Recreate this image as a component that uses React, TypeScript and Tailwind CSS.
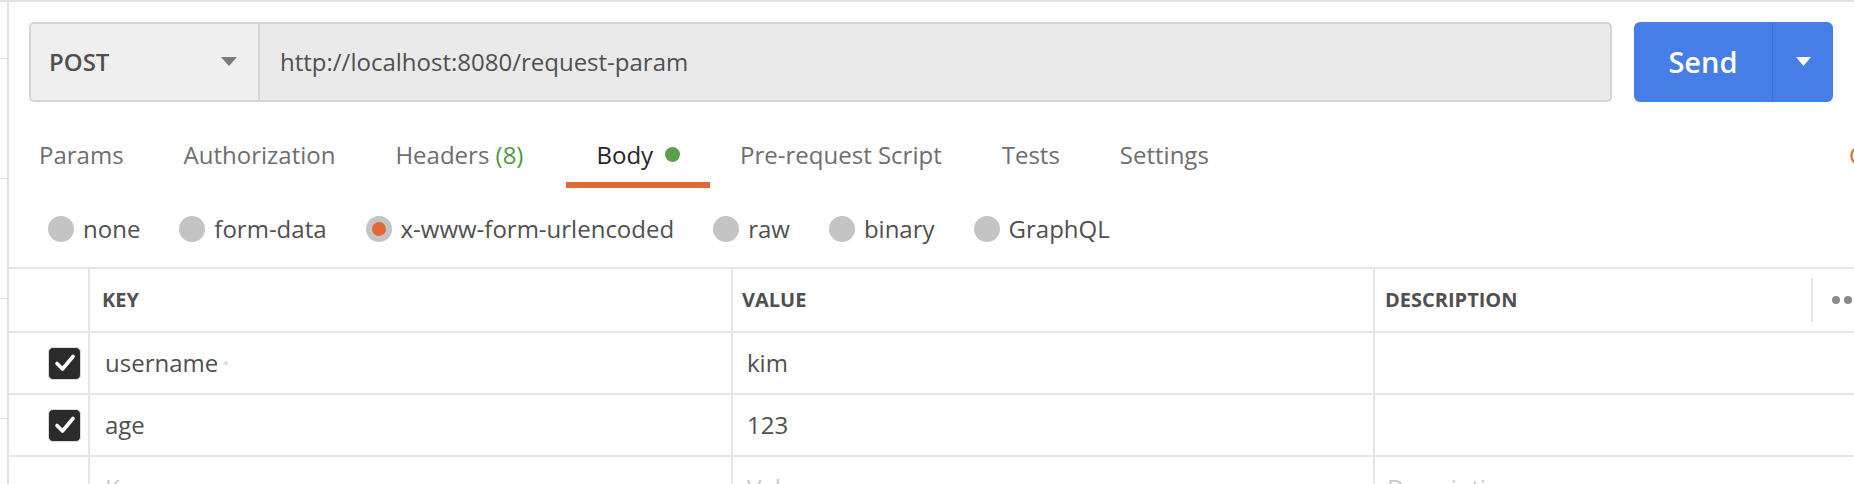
import React from "react";

const tabs = [
  { label: "Params" },
  { label: "Authorization" },
  { label: "Headers", count: "(8)" },
  { label: "Body", active: true, dot: true },
  { label: "Pre-request Script" },
  { label: "Tests" },
  { label: "Settings" },
];

const bodyTypes = [
  { label: "none" },
  { label: "form-data" },
  { label: "x-www-form-urlencoded", selected: true },
  { label: "raw" },
  { label: "binary" },
  { label: "GraphQL" },
];

const rows = [
  { key: "username", value: "kim", marker: true },
  { key: "age", value: "123" },
];

function Checkbox() {
  return (
    <div className="w-[33px] h-[33px] rounded-[5px] bg-[#2b2b2b] border border-[#d9d9d9] flex items-center justify-center">
      <svg width="24" height="24" viewBox="0 0 24 24" fill="none">
        <path d="M4 12.5 L9.5 18 L20 5.5" stroke="white" strokeWidth="3.6" strokeLinecap="round" strokeLinejoin="round" />
      </svg>
    </div>
  );
}

export default function App() {
  return (
    <div className="w-[1854px] h-[484px] overflow-hidden bg-white flex font-['Open_Sans',sans-serif] border-t-2 border-[#e2e2e2]">
      {/* sliver of the sidebar list behind the panel */}
      <div className="w-[7px] shrink-0 pt-[56px]">
        <div className="h-[120px] border-t border-[#e4e4e4]" />
        <div className="h-[120px] border-t border-[#e4e4e4]" />
        <div className="h-[120px] border-t border-[#e4e4e4]" />
        <div className="h-[120px] border-t border-[#e4e4e4]" />
      </div>

      <div className="flex-1 min-w-0 border-l-2 border-[#e2e2e2]">
        {/* URL bar */}
        <div className="flex items-center gap-[22px] pt-[20px] pl-[20px] pr-[21px]">
          <div className="flex-1 h-[80px] flex rounded-[5px] border-2 border-[#d4d4d4] bg-[#eaeaea] overflow-hidden">
            <div className="w-[229px] shrink-0 flex items-center justify-between pl-[18px] pr-[21px] bg-[#efefef] border-r-2 border-[#d6d6d6]">
              <span className="text-[24px] font-semibold text-[#505050]">POST</span>
              <svg width="16" height="10" viewBox="0 0 16 10">
                <path d="M0 0 H16 L8 9 Z" fill="#7a7a7a" />
              </svg>
            </div>
            <div className="flex items-center pl-[20px] text-[24px] text-[#505050]">
              http://localhost:8080/request-param
            </div>
          </div>
          <div className="w-[199px] h-[80px] flex rounded-[6px] bg-[#477de7] text-white">
            <div className="w-[139px] flex items-center justify-center text-[29px] font-semibold border-r border-[#3d6fd6]">
              Send
            </div>
            <div className="flex-1 flex items-center justify-center">
              <svg width="15" height="10" viewBox="0 0 15 10">
                <path d="M0 0 H15 L7.5 9 Z" fill="white" />
              </svg>
            </div>
          </div>
        </div>

        {/* Tabs */}
        <div className="mt-[20px] h-[66px] flex">
          {tabs.map((t) => (
            <div
              key={t.label}
              className={
                "shrink-0 flex items-center gap-[12px] pl-[30px] pt-[5px] border-b-[6px] text-[24px] " +
                (t.count ? "pr-[43px] " : "pr-[30px] ") +
                (t.active ? "border-[#de6a3a] text-[#262626]" : "border-transparent text-[#6e6e6e]")
              }
            >
              <span>
                {t.label}
                {t.count && <span className="text-[#4f9a3f]"> {t.count}</span>}
              </span>
              {t.dot && <span className="w-[15px] h-[15px] rounded-full bg-[#5b9e4d]" />}
            </div>
          ))}
          <div className="ml-auto w-[5px] overflow-hidden flex items-center pt-[5px] pb-[6px] text-[24px] text-[#de6a3a]">
            Cookies
          </div>
        </div>

        {/* Body type radios */}
        <div className="h-[79px] flex items-center pl-[39px] pt-[3px] gap-[39px]">
          {bodyTypes.map((b) => (
            <div key={b.label} className="flex items-center gap-[9px] text-[24px] text-[#505050]">
              <span className="w-[26px] h-[26px] rounded-full bg-[#c4c4c4] flex items-center justify-center">
                {b.selected && <span className="w-[14px] h-[14px] rounded-full bg-[#e0693a]" />}
              </span>
              <span>{b.label}</span>
            </div>
          ))}
        </div>

        {/* Key / value table */}
        <div className="border-t-2 border-[#e6e6e6]">
          <div className="h-[64px] grid grid-cols-[79px_643px_642px_1fr] border-b-2 border-[#e6e6e6] text-[20px] font-bold text-[#505050]">
            <div />
            <div className="border-l-2 border-[#e6e6e6] flex items-center pl-[12px]">KEY</div>
            <div className="border-l-2 border-[#e6e6e6] flex items-center pl-[9px]">VALUE</div>
            <div className="border-l-2 border-[#e6e6e6] flex items-center pl-[10px]">
              <span className="w-[426px] shrink-0">DESCRIPTION</span>
              <div className="h-[44px] border-l-2 border-[#e6e6e6] flex items-center gap-[4px] pl-[19px]">
                <span className="w-[8px] h-[8px] shrink-0 rounded-full bg-[#8a8a8a]" />
                <span className="w-[8px] h-[8px] shrink-0 rounded-full bg-[#8a8a8a]" />
                <span className="w-[8px] h-[8px] shrink-0 rounded-full bg-[#8a8a8a]" />
              </div>
            </div>
          </div>

          {rows.map((r) => (
            <div
              key={r.key}
              className="h-[62px] grid grid-cols-[79px_643px_642px_1fr] border-b-2 border-[#e6e6e6] text-[24px] text-[#505050]"
            >
              <div className="flex items-center justify-end pr-[7px]">
                <Checkbox />
              </div>
              <div className="border-l-2 border-[#e6e6e6] flex items-center gap-[6px] pl-[15px]">
                <span>{r.key}</span>
                {r.marker && <span className="w-[4px] h-[4px] rounded-full bg-[#dcdcdc]" />}
              </div>
              <div className="border-l-2 border-[#e6e6e6] flex items-center pl-[14px]">{r.value}</div>
              <div className="border-l-2 border-[#e6e6e6]" />
            </div>
          ))}

          <div className="h-[62px] grid grid-cols-[79px_643px_642px_1fr] text-[24px] text-[#c9c9c9]">
            <div />
            <div className="border-l-2 border-[#e6e6e6] flex items-center pl-[15px]">Key</div>
            <div className="border-l-2 border-[#e6e6e6] flex items-center pl-[14px]">Value</div>
            <div className="border-l-2 border-[#e6e6e6] flex items-center pl-[12px]">Description</div>
          </div>
        </div>
      </div>
    </div>
  );
}
